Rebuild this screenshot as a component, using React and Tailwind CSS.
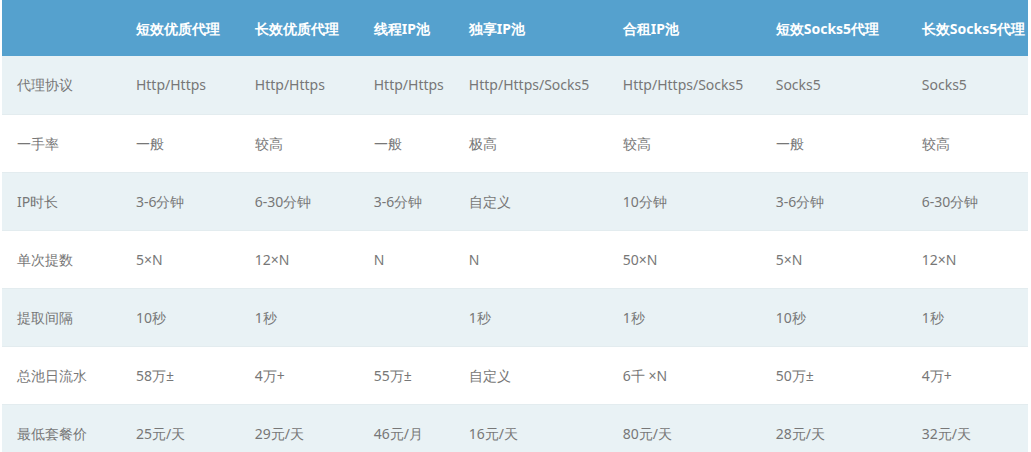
const heads = ['', '短效优质代理', '长效优质代理', '线程IP池', '独享IP池', '合租IP池', '短效Socks5代理', '长效Socks5代理'];
const widths = ['w-[105px]', 'w-[105px]', 'w-[105px]', 'w-[84px]', 'w-[136px]', 'w-[135px]', 'w-[129px]', 'w-[107px]'];
const rows = [
  ['代理协议', 'Http/Https', 'Http/Https', 'Http/Https', 'Http/Https/Socks5', 'Http/Https/Socks5', 'Socks5', 'Socks5'],
  ['一手率', '一般', '较高', '一般', '极高', '较高', '一般', '较高'],
  ['IP时长', '3-6分钟', '6-30分钟', '3-6分钟', '自定义', '10分钟', '3-6分钟', '6-30分钟'],
  ['单次提数', '5×N', '12×N', 'N', 'N', '50×N', '5×N', '12×N'],
  ['提取间隔', '10秒', '1秒', '', '1秒', '1秒', '10秒', '1秒'],
  ['总池日流水', '58万±', '4万+', '55万±', '自定义', '6千 ×N', '50万±', '4万+'],
  ['最低套餐价', '25元/天', '29元/天', '46元/月', '16元/天', '80元/天', '28元/天', '32元/天'],
];

export default function App() {
  return (
    <div className="w-[1031px] h-[452px] bg-white pl-[2px] overflow-hidden font-['Liberation_Sans','Noto_Sans_CJK_SC',sans-serif] text-[14px]">
      <table className="w-[1026px] table-fixed border-collapse">
        <thead>
          <tr className="h-[56px] bg-[#55a1ce]">
            {heads.map((h, i) => (
              <th key={i} className={`${widths[i]} pl-[15px] pr-0 text-left font-bold text-white`}>{h}</th>
            ))}
          </tr>
        </thead>
        <tbody>
          {rows.map((r, ri) => (
            <tr key={ri} className={`h-[58px] border-b border-[#e3ecef] ${ri % 2 === 0 ? 'bg-[#e9f2f5]' : 'bg-white'}`}>
              {r.map((c, ci) => (
                <td key={ci} className="pl-[15px] pr-0 text-[#777777] whitespace-nowrap">{c}</td>
              ))}
            </tr>
          ))}
        </tbody>
      </table>
    </div>
  );
}
